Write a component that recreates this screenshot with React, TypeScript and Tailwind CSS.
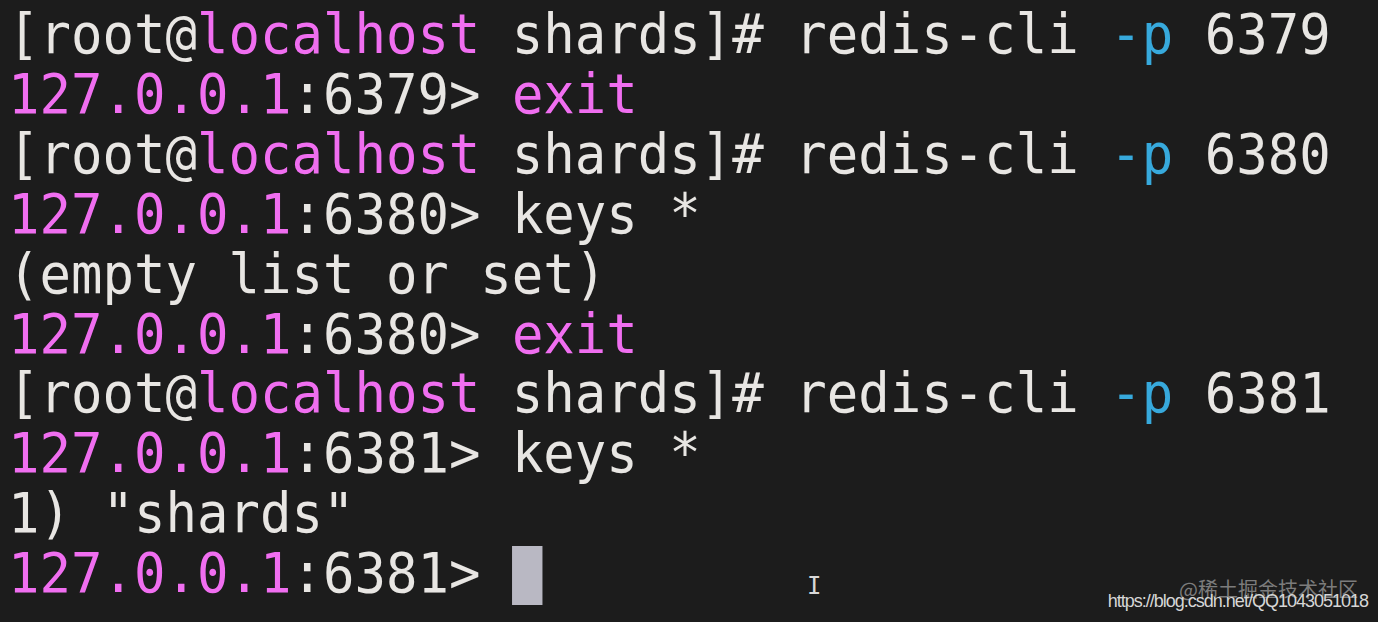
import React from "react";

const P = ({ children }: { children: React.ReactNode }) => (
  <span className="text-[#f06ef0]">{children}</span>
);
const B = ({ children }: { children: React.ReactNode }) => (
  <span className="text-[#37a9dc]">{children}</span>
);

const Prompt = ({ port }: { port: string }) => (
  <>
    [root@<P>localhost</P> shards]# redis-cli <B>-p</B> {port}
  </>
);

const Redis = ({ port }: { port: string }) => (
  <>
    <P>127.0.0.1</P>:{port}&gt;{" "}
  </>
);

export default function App() {
  return (
    <div className="relative w-[1378px] h-[622px] overflow-hidden bg-[#1c1c1c]">
      <div className="pt-[5px] pl-[8px]">
        <div
          className="origin-top-left scale-x-[0.951] text-[55px] leading-[59.9px] text-[#e8e6e3] whitespace-pre"
          style={{ fontFamily: '"DejaVu Sans Mono", monospace' }}
        >
          <div><Prompt port="6379" /></div>
          <div><Redis port="6379" /><P>exit</P></div>
          <div><Prompt port="6380" /></div>
          <div><Redis port="6380" />keys *</div>
          <div>(empty list or set)</div>
          <div><Redis port="6380" /><P>exit</P></div>
          <div><Prompt port="6381" /></div>
          <div><Redis port="6381" />keys *</div>
          <div>1) "shards"</div>
          <div className="flex items-start">
            <span><Redis port="6381" /></span>
            <span className="inline-block w-[32px] h-[59px] mt-[2px] bg-[#b9b8c3]" />
          </div>
        </div>
      </div>
      <div
        className="absolute left-[807px] top-[573px] text-[24px] leading-[26px] text-[#d8d8d8]"
        style={{ fontFamily: '"DejaVu Sans Mono", monospace' }}
      >
        I
      </div>
      <div
        className="absolute right-[20px] top-[578px] text-[20px] leading-[22px] text-[#7c7c7c]"
        style={{ fontFamily: '"Noto Sans CJK SC", sans-serif' }}
      >
        @稀土掘金技术社区
      </div>
      <div
        className="absolute right-[10px] top-[591px] text-[18px] leading-[20px] tracking-[-1px] text-[#d6d6d6]"
        style={{ fontFamily: '"Liberation Sans", sans-serif' }}
      >
        https://blog.csdn.net/QQ1043051018
      </div>
    </div>
  );
}
